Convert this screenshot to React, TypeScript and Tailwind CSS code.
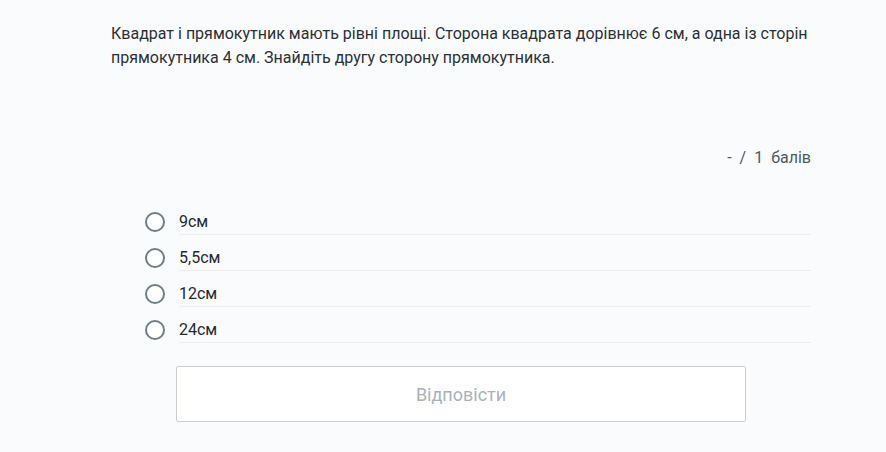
import React from 'react';

const options = ['9см', '5,5см', '12см', '24см'];

const App: React.FC = () => {
  return (
    <div className="min-h-[452px] w-full bg-[#fafbfd] font-['Roboto',sans-serif]">
      <div className="w-[700px] ml-[111px] pt-[22px]">
        {/* Question */}
        <p className="text-[16px] leading-[24px] text-[#2c3034]">
          Квадрат і прямокутник мають рівні площі. Сторона квадрата дорівнює 6 см, а одна із сторін
          прямокутника 4 см. Знайдіть другу сторону прямокутника.
        </p>

        {/* Score */}
        <div className="mt-[76px] flex justify-end gap-[8px] text-[16px] leading-[24px] text-[#4f5a63]">
          <span>-</span>
          <span>/</span>
          <span>1</span>
          <span>балів</span>
        </div>

        {/* Options */}
        <div className="mt-[29px] pl-[34px]">
          {options.map((opt) => (
            <label key={opt} className="flex h-9 items-end cursor-pointer">
              <span className="mb-[3px] mr-[14px] h-5 w-5 shrink-0 rounded-full border-2 border-[#6f7e87] bg-white" />
              <span className="flex h-9 flex-1 items-end border-b border-[#eceef1] pb-[2px] text-[16px] leading-[20px] text-[#25292d]">
                {opt}
              </span>
            </label>
          ))}
        </div>

        {/* Submit */}
        <div className="mt-[23px] flex justify-center">
          <button
            type="button"
            className="h-[56px] w-[570px] rounded-[2px] border border-[#c9ced3] bg-white text-[18px] text-[#a9b2ba]"
          >
            Відповісти
          </button>
        </div>
      </div>
    </div>
  );
};

export default App;
